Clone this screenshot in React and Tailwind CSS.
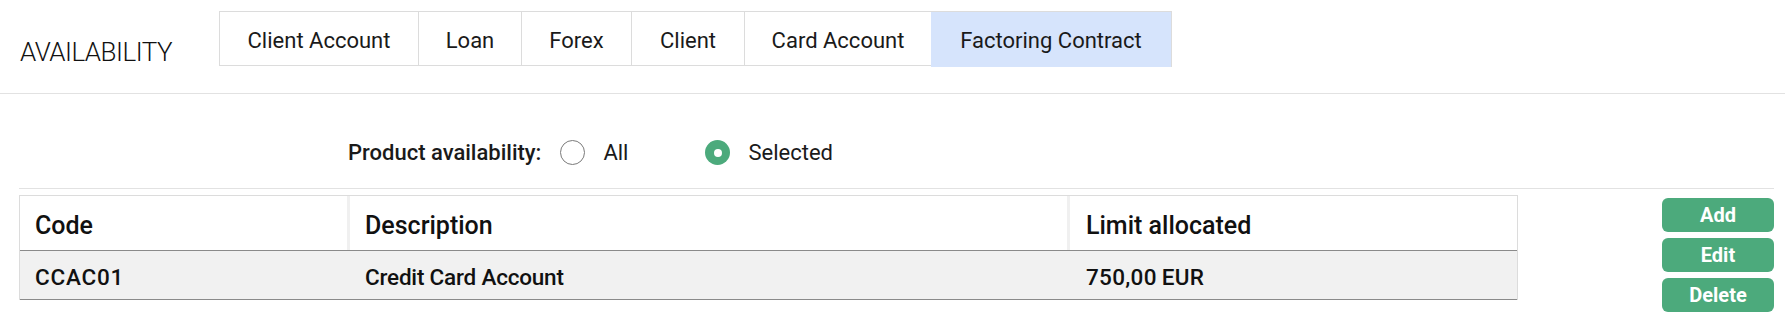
import React from "react";

const tabs = [
  { label: "Client Account", w: "w-[199px]" },
  { label: "Loan", w: "w-[103px]" },
  { label: "Forex", w: "w-[110px]" },
  { label: "Client", w: "w-[113px]" },
  { label: "Card Account", w: "w-[187px]" },
];

export default function App() {
  return (
    <div className="w-[1785px] h-[325px] bg-white font-[Roboto,sans-serif] text-[#1a1a1a]">
      {/* Header */}
      <div className="flex h-[94px] border-b border-[#e2e2e2] pl-[20px]">
        <div className="w-[199px] shrink-0 pt-[39px] text-[26px] font-light leading-none tracking-[-0.5px] text-[#111]">
          AVAILABILITY
        </div>
        <div className="flex mt-[11px] h-[55px] border-y border-[#dcdcdc]">
          {tabs.map((t) => (
            <div
              key={t.label}
              className={`${t.w} shrink-0 border-l border-[#dcdcdc] pt-[18px] text-center text-[22px] leading-none`}
            >
              {t.label}
            </div>
          ))}
          <div className="w-[241px] shrink-0 -mb-[2px] border-r border-[#dcdcdc] bg-[#d6e4fc] pt-[18px] text-center text-[22px] leading-none">
            Factoring Contract
          </div>
        </div>
      </div>

      {/* Product availability */}
      <div className="pt-[46px] pl-[348px]">
        <div className="flex h-[25px] items-center text-[22px] leading-none">
          <span className="font-medium">Product availability:</span>
          <span className="ml-[19px] h-[25px] w-[25px] rounded-full border border-[#7a7a7a] bg-white" />
          <span className="ml-[18px]">All</span>
          <span className="ml-[77px] flex h-[25px] w-[25px] items-center justify-center rounded-full bg-[#4caa7c]">
            <span className="h-[8px] w-[8px] rounded-full bg-white" />
          </span>
          <span className="ml-[18px]">Selected</span>
        </div>
      </div>

      {/* Content */}
      <div className="ml-[19px] mr-[11px] mt-[23px] border-t border-[#e2e2e2] pt-[6px]">
        <div className="flex items-start justify-between">
          <div className="w-[1499px] border-x border-t border-[#dcdcdc]">
            <div className="grid grid-cols-[330px_720px_1fr] border-b border-[#8a8a8a] text-[25px] font-medium leading-none text-[#111]">
              <div className="h-[54px] border-r-[3px] border-[#f0f0f0] pl-[15px] pt-[17px]">Code</div>
              <div className="h-[54px] border-r-[3px] border-[#f0f0f0] pl-[15px] pt-[17px]">Description</div>
              <div className="h-[54px] pl-[16px] pt-[17px]">Limit allocated</div>
            </div>
            <div className="grid grid-cols-[330px_720px_1fr] border-b border-[#8a8a8a] bg-[#f1f1f1] text-[22.5px] font-medium leading-none text-[#111]">
              <div className="h-[48px] pl-[15px] pt-[15px] tracking-[0.8px]">CCAC01</div>
              <div className="h-[48px] pl-[15px] pt-[15px] tracking-[-0.2px]">Credit Card Account</div>
              <div className="h-[48px] pl-[16px] pt-[15px] tracking-[0.3px]">750,00&#8201;EUR</div>
            </div>
          </div>
          <div className="mt-[3px] flex w-[112px] flex-col gap-[6px]">
            {["Add", "Edit", "Delete"].map((b) => (
              <button
                key={b}
                className="flex h-[34px] w-[112px] items-center justify-center rounded-[6px] bg-[#4caa7c] text-[20px] font-bold leading-none text-white"
              >
                {b}
              </button>
            ))}
          </div>
        </div>
      </div>
    </div>
  );
}
